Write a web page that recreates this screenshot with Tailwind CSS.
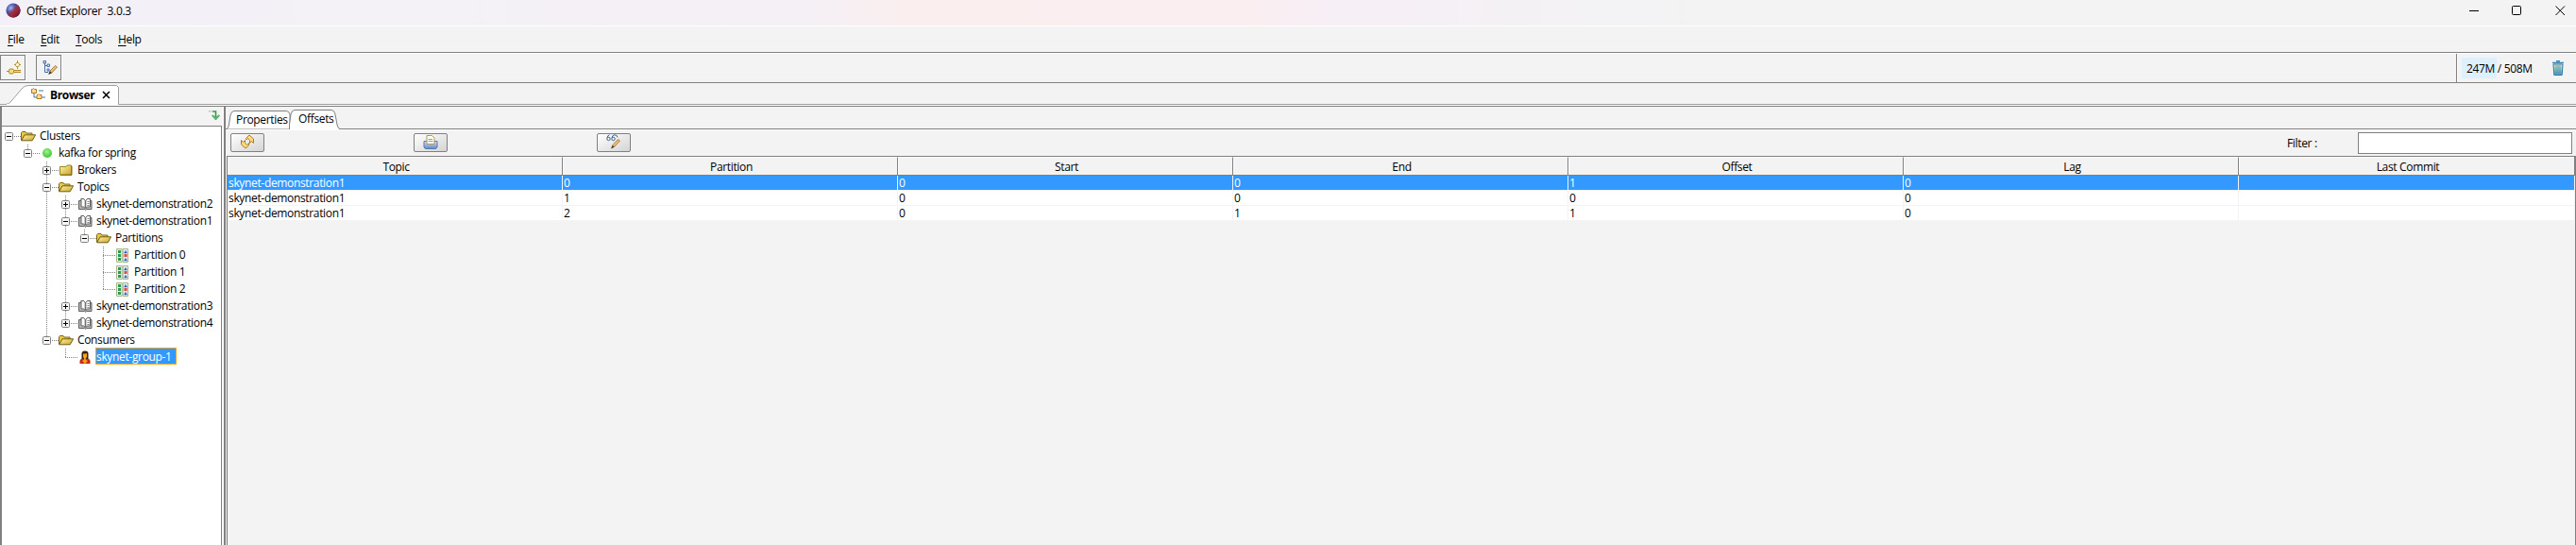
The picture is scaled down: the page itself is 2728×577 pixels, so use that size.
<!DOCTYPE html>
<html lang="en">
<head>
<meta charset="utf-8">
<title>Offset Explorer 3.0.3</title>
<script src="https://cdn.jsdelivr.net/npm/@tailwindcss/browser@4"></script>
</head>
<body class="w-[2728px] h-[577px] overflow-hidden bg-[#f3f3f3] text-black font-['Open_Sans','Noto_Sans',sans-serif] text-[12px] leading-[16px] tracking-[-0.34px] flex flex-col">

<svg width="0" height="0" class="absolute">
  <defs>
    <linearGradient id="gold" x1="0" y1="0" x2="1" y2="1"><stop offset="0" stop-color="#fff6a8"/><stop offset="1" stop-color="#c9a227"/></linearGradient>
    <radialGradient id="globe" cx=".35" cy=".35" r=".75"><stop offset="0" stop-color="#a9b8ea"/><stop offset=".4" stop-color="#4a5fb0"/><stop offset="1" stop-color="#1d1b5f"/></radialGradient>
    <linearGradient id="globeRed" x1="0" y1="0" x2="1" y2="1"><stop offset=".35" stop-color="#b02a38" stop-opacity="0"/><stop offset=".6" stop-color="#a5283a"/><stop offset="1" stop-color="#4a1030"/></linearGradient>
    <radialGradient id="green" cx=".45" cy=".35" r=".65"><stop offset="0" stop-color="#a4f08a"/><stop offset="1" stop-color="#38c832"/></radialGradient>
    <linearGradient id="blueTray" x1="0" y1="0" x2="0" y2="1"><stop offset="0" stop-color="#d5e3f7"/><stop offset="1" stop-color="#5f86c6"/></linearGradient>
    <linearGradient id="bin" x1="0" y1="0" x2="0" y2="1"><stop offset="0" stop-color="#e4ecc4"/><stop offset="1" stop-color="#4a9cc4"/></linearGradient>
  </defs>
  <symbol id="open" viewBox="0 0 16 12"><path d="M.5 10.500V2.500l1-1h3.500l1 1.500h6V5" fill="#e8c84a" stroke="#7d6a12"/><path d="M.7 10.800 4 4.800H15.600L12.200 10.800Z" fill="url(#gold)" stroke="#6e5c10"/></symbol>
  <symbol id="closed" viewBox="0 0 14 12"><path d="M.5 11V2.500H7l1-1.500h4.500V11Z" fill="url(#gold)" stroke="#a08420"/><path d="M1 11.300H13V2" fill="none" stroke="#7d6a12"/></symbol>
  <symbol id="book" viewBox="0 0 15 13"><path d="M.5 2.500H3V.5h2.500L7.500 2.500 9.500.5H12.500V2.500H14V11.500H8.500L7.500 12.500 6.500 11.500H.5Z" fill="#b8b8b8" stroke="#606060"/><path d="M3 .5h2.500L7.200 2.500v8L5.500 9H3Z" fill="#fff" stroke="#606060"/><path d="M9.500.5h3V9H9.500L7.800 10.500v-8Z" fill="#fff" stroke="#606060"/><path d="M9.500 3.500h2M9.500 5.500h2M9.500 7.500h2" stroke="#808080"/></symbol>
  <symbol id="part" viewBox="0 0 14 15"><path d="M.5.5h5.700v14H.5ZM7.200.5h5.300v14H7.200Z" fill="#e4f2f2" stroke="#a8b48c"/><path d="M2 2h3v3H2ZM2 6h3v3H2ZM2 10h3v3H2Z" fill="#2f9a50"/><path d="M8.500 5 10 2.200 11.500 5ZM8.500 13 10 10.200 11.500 13Z" fill="#2b5fb0" stroke="#2b5fb0" stroke-width=".4"/><path d="M8.500 6h3v3h-3Z" fill="#e04a3a"/></symbol>
  <symbol id="user" viewBox="0 0 12 15"><path d="M.5 14V11.500Q.5 9 3.500 8.500h5Q11.500 9 11.500 11.500V14Z" fill="#c8261c"/><path d="M2.500 9V3.500Q2.500.5 6 .5T9.500 3.500V9Z" fill="#3a2008"/><path d="M4 3.500q2 .2 4-.5V7L6.800 8.500V10L9 11 6 14 3 11l2-1V8.500L4 7Z" fill="#f0a818"/></symbol>
  <symbol id="dot" viewBox="0 0 12 12"><circle cx="6" cy="6" r="5" fill="url(#green)"/></symbol>
</svg>

<!-- title bar -->
<header class="h-[28px] shrink-0 border-b border-white flex items-start bg-[linear-gradient(90deg,#f3f1f7_0%,#f4f0f6_31%,#faeeef_35%,#fbeef0_48%,#f6eff6_52%,#f3f2f4_62%,#f3f3f3_70%)]">
  <svg class="ml-[6px] mt-[3px]" width="16" height="16" viewBox="0 0 16 16"><circle cx="8" cy="8" r="7.600" fill="url(#globe)"/><circle cx="8" cy="8" r="7.600" fill="url(#globeRed)"/></svg>
  <span class="ml-[6px] mt-[4px] whitespace-pre tracking-[-0.3px]">Offset Explorer  3.0.3</span>
  <div class="ml-auto flex items-start mt-[6px] mr-[11px]">
    <svg width="10" height="11" viewBox="0 0 10 11"><path d="M0 5.500H10" stroke="#000"/></svg>
    <svg class="ml-[35px]" width="10" height="11" viewBox="0 0 10 11"><rect x=".5" y=".5" width="9" height="9" rx="1" fill="none" stroke="#000"/></svg>
    <svg class="ml-[36px]" width="11" height="11" viewBox="0 0 11 11"><path d="M.5.5 10 10M10 .5.5 10" stroke="#000"/></svg>
  </div>
</header>

<!-- menu bar -->
<nav class="h-[28px] shrink-0 border-b border-[#808080] flex pt-[6px] pl-[8px]">
  <span class="w-[35px]"><u class="underline-offset-2">F</u>ile</span>
  <span class="w-[37px]"><u class="underline-offset-2">E</u>dit</span>
  <span class="w-[45px]"><u class="underline-offset-2">T</u>ools</span>
  <span><u class="underline-offset-2">H</u>elp</span>
</nav>

<!-- toolbar -->
<div class="h-[32px] shrink-0 border-y border-t-white border-b-[#808080] flex">
  <div class="w-[27px] h-[27px] mt-[1px] border border-[#808080] shadow-[1px_1px_0_#fff] flex items-center justify-center">
    <svg class="ml-[2px]" width="16" height="16" viewBox="0 0 16 16"><path d="M11.500 1.500 14 4.500l-2.500 3L9 4.500Z" fill="#fffbe0" stroke="#b8962c"/><path d="M11.500 0V3M11.500 6V9M8 4.500h2M13 4.500h2" stroke="#b8962c"/><path d="M0 11.500H2M8 10.500h7M8 12.500h7" stroke="#b08a20"/><path d="M8 11.500h7" stroke="#f5dc84"/><rect x="2.500" y="9" width="5" height="5" rx="1.500" fill="#f5dc84" stroke="#b08a20"/></svg>
  </div>
  <div class="w-[27px] h-[27px] mt-[1px] ml-[11px] border border-[#808080] shadow-[1px_1px_0_#fff] flex items-center justify-center">
    <svg class="ml-[3px]" width="16" height="16" viewBox="0 0 16 16"><path d="M2.500 3v9.500H6M2.500 5.500H6" fill="none" stroke="#4a6ea8"/><path d="M1 .5h2.500v2.500H1ZM5 4h2.500v2.500H5ZM5 9h2v2H5Z" fill="#dce8f8" stroke="#4a6ea8"/><path d="M7 14l1-3L13.500 5.500 15.500 7 10 13Z" fill="#e8c078" stroke="#9a6a2a" stroke-width=".8"/><path d="M6.200 15 7.800 11.300 9.800 13.200Z" fill="#333"/></svg>
  </div>
  <div class="ml-auto w-[127px] border-l border-[#808080] shadow-[inset_1px_0_0_#fff] flex items-start">
    <div class="ml-[5px] mt-[4px] h-[22px] w-[37px] bg-[#deeffd] pl-[5px] pt-[4px] whitespace-nowrap">247M / 508M</div>
    <svg class="ml-[59px] mt-[7px]" width="12" height="16" viewBox="0 0 12 16"><path d="M1 4h10l-.8 11.500H1.800Z" fill="url(#bin)" stroke="#2a78a8"/><path d="M0 2.500H12M4 .8h4" stroke="#3a86b4" stroke-width="1.500"/><path d="M4 5v9M6 5v9M8 5v9" stroke="#2a78a8" stroke-width=".6"/></svg>
  </div>
</div>

<!-- view tab -->
<div class="h-[25px] shrink-0 border-b border-[#808080] flex flex-col">
  <div class="h-[23px] flex border-b border-[#a0a0a0]">
    <div class="relative w-[127px] h-[23px]">
      <svg class="absolute left-0 top-0" width="127" height="24" viewBox="0 0 127 24"><path d="M6 22.500Q10 22 12 19L23 6Q26 2.500 30 2.500H123.500L125.500 4.500V22.500" fill="#fff" stroke="#a0a0a0"/><path d="M7 22.500H125" stroke="#fff"/></svg>
      <div class="relative flex pl-[33px] pt-[5px]">
        <svg width="15" height="14" viewBox="0 0 15 14"><path d="M3 6v4h4M8 3h5M11 10h4" fill="none" stroke="#2f7fb8"/><path d="M.5 1.500h1l1-1 1 1h2v4H.5ZM6 7.500h1l1-1 1 1h2v4H6Z" fill="#fbd99a" stroke="#b8761e"/></svg>
        <b class="ml-[5px]">Browser</b>
        <svg class="ml-[8px] mt-[3px]" width="9" height="9" viewBox="0 0 9 9"><path d="M1 1l7 7M8 1 1 8" stroke="#000" stroke-width="1.500"/></svg>
      </div>
    </div>
  </div>
  <div class="h-px bg-white"></div>
</div>

<main class="flex-1 flex min-h-0">
  <!-- cluster browser -->
  <aside class="w-[239px] flex border-l-2 border-r-2 border-[#808080] shrink-0">
    <div class="w-[235px] pr-[2px] flex flex-col bg-[#f9f9f9]">
      <div class="h-[21px] shrink-0 border-b border-[#808080] bg-[#f3f3f3] flex justify-end">
        <svg class="mt-[4px] mr-[2px]" width="12" height="11" viewBox="0 0 12 11"><path d="M0 .8h4" stroke="#58b070" stroke-dasharray="1 1"/><path d="M4 1h3.500v6" fill="none" stroke="#2f9a50" stroke-width="1.600"/><path d="M3.500 5.500 7.500 10l4-4.500-1-.5-3 2.500-3-2.500Z" fill="#5cc070" stroke="#2a8a48" stroke-width=".6"/></svg>
      </div>
      <div id="tree" class="flex-1 bg-white border-r border-[#808080] overflow-hidden pt-[1px]"></div>
    </div>
  </aside>

  <section class="flex-1 flex flex-col min-w-0">
    <!-- detail tabs -->
    <div class="h-[24px] shrink-0 border-b border-[#808080] relative">
      <svg class="absolute left-0 top-0" width="124" height="25" viewBox="0 0 124 25"><path d="M1 23.500Q3 23 3.500 19L5 9Q6 4.500 9 4.500H64Q67 4.500 68 8V23.500" fill="#fff" stroke="#808080"/><path d="M67.500 24V19L69 8Q70 3.500 73 3.500H112Q115 3.500 116 8L118 19Q119 23.500 121 23.500" fill="#fff" stroke="#808080"/><path d="M68 23.500h52" stroke="#fff"/></svg>
      <div class="relative flex pl-[11px]">
        <span class="mt-[6px] w-[66px]">Properties</span><span class="mt-[5px]">Offsets</span>
      </div>
    </div>
    <!-- actions and filter -->
    <div class="h-[28px] shrink-0 border-t border-white flex items-start pl-[5px] pr-[4px] pt-[3px]">
      <div class="w-[36px] h-[20px] border border-[#808080] rounded-[2px] bg-linear-to-br from-white to-[#d4d4d4] flex justify-center">
        <svg width="16" height="16" viewBox="0 0 16 16"><path d="M6.500 4.500 10 1l4.500 4V9.500L12.500 7.500 10.500 9.500V6.500L8.500 4.500 7 6Z" fill="#fbdc80" stroke="#b07a20"/><path d="M1.500 6.500 3.500 8.500 5.500 6.500V9.500L7.500 11.500 9.500 9.500 9.500 12 6 15 1.500 11Z" fill="#fbdc80" stroke="#b07a20"/></svg>
      </div>
      <div class="ml-[158px] w-[36px] h-[20px] border border-[#808080] rounded-[2px] bg-linear-to-br from-white to-[#d4d4d4] flex justify-center">
        <svg width="16" height="17" viewBox="0 0 16 17"><path d="M1 7.500h14v6.500l-1.500 1.500h-11L1 14Z" fill="url(#blueTray)" stroke="#5878b0"/><path d="M4 10.500V1.500h5.500L12 4v6.500Z" fill="#fffdf0" stroke="#b09a58"/><path d="M5.500 5.500h4.500M5.500 7.500h5" stroke="#88a0c8"/></svg>
      </div>
      <div class="ml-[158px] w-[36px] h-[20px] border border-[#808080] rounded-[2px] bg-linear-to-br from-white to-[#d4d4d4] flex justify-center">
        <svg width="16" height="16" viewBox="0 0 16 16"><path d="M1 4Q1.500 1 3.500.8M6 4Q6.500 1 8.500.8q3-.3 3.500 2.500" fill="none" stroke="#3a5f8a"/><circle cx="2.500" cy="5" r="1.700" fill="#fff" stroke="#3a5f8a"/><circle cx="7.500" cy="5" r="1.700" fill="#fff" stroke="#3a5f8a"/><path d="M6 14.500l1-3L12.500 5.500l2 1.500L9 13Z" fill="#f0c078" stroke="#9a6a2a" stroke-width=".8"/><path d="M5 15.500 6.700 12 8.500 13.500Z" fill="#333"/></svg>
      </div>
      <span class="ml-auto mt-[3px] w-[75px]">Filter :</span>
      <div class="w-[227px] h-[23px] -mt-[1px] border border-[#808080] bg-white"></div>
    </div>
    <!-- offsets table -->
    <div class="flex-1 ml-[1px] border-l border-t border-r border-[#808080] flex flex-col">
      <div id="head" class="h-[20px] grid grid-cols-[repeat(7,355px)_1px] border-b border-[#808080]"></div>
      <div id="rows" class="flex flex-col"></div>
    </div>
  </section>
</main>

<script>
const cols = ['Topic', 'Partition', 'Start', 'End', 'Offset', 'Lag', 'Last Commit'];
document.getElementById('head').innerHTML = cols.map((c, i) =>
  `<div class="text-center pt-[2px] pl-[3px] border-t border-t-white ${i < 6 ? 'border-r border-r-[#808080] shadow-[1px_0_0_#fff]' : ''}">${c}</div>`).join('') +
  '<div class="bg-[#808080]"></div>';

const data = [
  ['skynet-demonstration1', 0, 0, 0, 1, 0, ''],
  ['skynet-demonstration1', 1, 0, 0, 0, 0, ''],
  ['skynet-demonstration1', 2, 0, 1, 1, 0, ''],
];
document.getElementById('rows').innerHTML = data.map((r, n) =>
  `<div class="w-[2485px] grid grid-cols-[repeat(7,355px)] h-[16px] border-b border-[#f3f3f3] ${n ? 'bg-white' : 'bg-[#3399ff] text-white'}">` +
  r.map((v, i) => `<div class="h-[15px] pl-[1px] leading-[15px] ${i < 6 ? 'border-r border-[#f3f3f3]' : ''}">${v}</div>`).join('') + '</div>').join('');

// guides: one character per ancestor column; join: extent of the node's own line (u = upper half, b = full height)
const nodes = [
  ['',      '',  '-', 'open',   16, 12, 'Clusters'],
  [' ',     'u', '-', 'dot',    12, 12, 'kafka for spring'],
  ['  ',    'b', '+', 'closed', 14, 12, 'Brokers'],
  ['  ',    'b', '-', 'open',   16, 12, 'Topics'],
  ['  |',   'b', '+', 'book',   15, 13, 'skynet-demonstration2'],
  ['  |',   'b', '-', 'book',   15, 13, 'skynet-demonstration1'],
  ['  ||',  'u', '-', 'open',   16, 12, 'Partitions'],
  ['  || ', 'b', '',  'part',   14, 15, 'Partition 0'],
  ['  || ', 'b', '',  'part',   14, 15, 'Partition 1'],
  ['  || ', 'u', '',  'part',   14, 15, 'Partition 2'],
  ['  |',   'b', '+', 'book',   15, 13, 'skynet-demonstration3'],
  ['  |',   'u', '+', 'book',   15, 13, 'skynet-demonstration4'],
  ['  ',    'u', '-', 'open',   16, 12, 'Consumers'],
  ['   ',   'u', '',  'user',   12, 15, 'skynet-group-1', true],
];
const line = d => `<path d="${d}" stroke="#808080" stroke-dasharray="1 1" fill="none"/>`;
document.getElementById('tree').innerHTML = nodes.map(([guides, join, box, icon, w, h, label, sel]) => {
  const cells = [...guides].map(g =>
    `<svg class="shrink-0" width="20" height="18" viewBox="0 0 20 18">${g === '|' ? line('M10.500 0V18') : ''}</svg>`).join('');
  const own = (join ? line(join === 'b' ? 'M10.500 0V18' : 'M10.500 0V9') : '') + line('M10 9.500H24') +
    (box ? '<rect x="6.500" y="5.500" width="8" height="8" rx="1" fill="#f6f6f4" stroke="#808080"/><path d="M8 9.500h5' +
      (box === '+' ? 'M10.500 7v5' : '') + '" stroke="#000"/>' : '');
  return `<div class="flex h-[18px] -ml-[3px] whitespace-nowrap">${cells}` +
    `<svg class="shrink-0 overflow-visible" width="20" height="18" viewBox="0 0 20 18">${own}</svg>` +
    `<span class="w-[22px] flex items-center justify-center shrink-0"><svg class="relative" width="${w}" height="${h}"><use href="#${icon}"/></svg></span>` +
    (sel ? `<span class="h-[18px] -mt-px pt-px w-[86px] border border-[#f5a623] bg-[#3399ff] text-white">${label}</span>`
         : `<span class="ml-[1px] mt-[1px]">${label}</span>`) + '</div>';
}).join('');
</script>
</body>
</html>
